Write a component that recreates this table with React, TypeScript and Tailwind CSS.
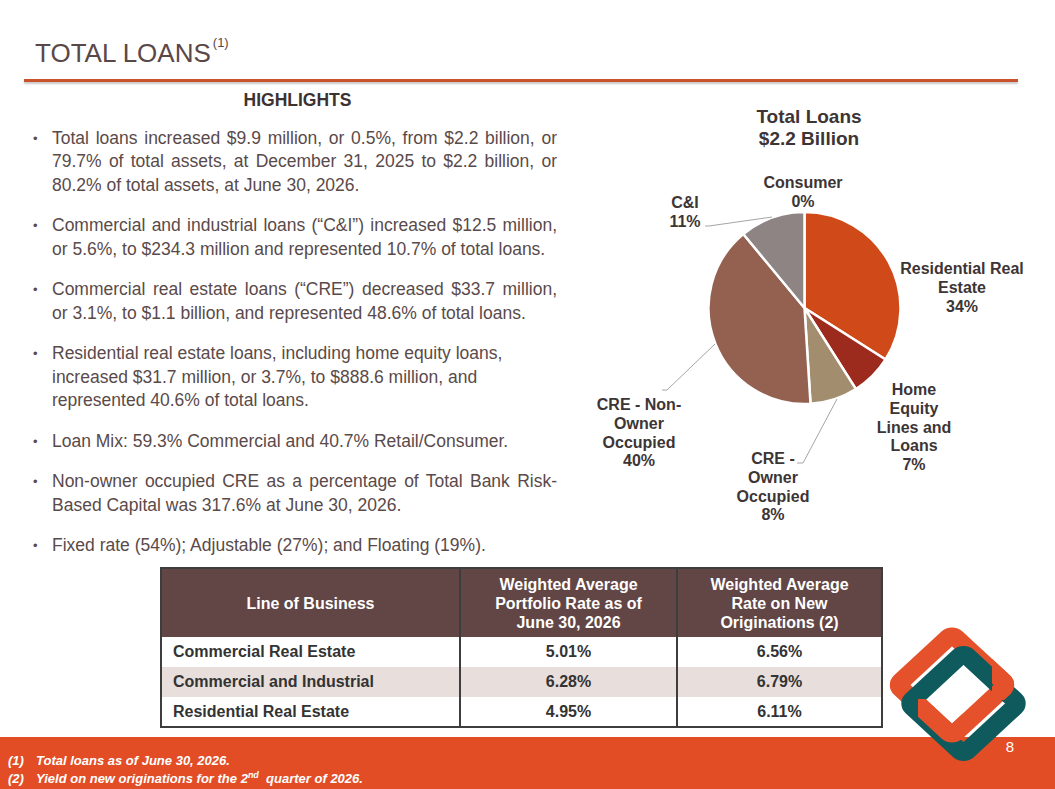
import React from 'react';

const CX = 804.5;
const CY = 308;
const R = 96;

const slices = [
  { name: 'Residential Real Estate', pct: 34, color: '#d04a19' },
  { name: 'Home Equity Lines and Loans', pct: 7, color: '#9c2b1e' },
  { name: 'CRE - Owner Occupied', pct: 8, color: '#a28e6f' },
  { name: 'CRE - Non-Owner Occupied', pct: 40, color: '#946050' },
  { name: 'C&I', pct: 11, color: '#8e8484' },
  { name: 'Consumer', pct: 0, color: '#d9d9d9' }
];

const point = (deg: number) => {
  const a = (deg * Math.PI) / 180;
  return [CX + R * Math.sin(a), CY - R * Math.cos(a)];
};

const slicePath = (start: number, end: number) => {
  const [x1, y1] = point(start);
  const [x2, y2] = point(end);
  const large = end - start > 180 ? 1 : 0;
  return `M${CX} ${CY} L${x1} ${y1} A${R} ${R} 0 ${large} 1 ${x2} ${y2} Z`;
};

// chart labels: x, first baseline, line gap, lines
const labels = [
  { x: 809, y: 123, gap: 22, size: 19, lines: ['Total Loans', '$2.2 Billion'] },
  { x: 803, y: 188, gap: 18.5, size: 16, lines: ['Consumer', '0%'] },
  { x: 685, y: 208, gap: 19, size: 16, lines: ['C&I', '11%'] },
  { x: 962, y: 274, gap: 19, size: 16, lines: ['Residential Real', 'Estate', '34%'] },
  { x: 914, y: 395, gap: 18.8, size: 16, lines: ['Home', 'Equity', 'Lines and', 'Loans', '7%'] },
  { x: 773, y: 464, gap: 18.8, size: 16, lines: ['CRE -', 'Owner', 'Occupied', '8%'] },
  { x: 639, y: 410, gap: 18.8, size: 16, lines: ['CRE - Non-', 'Owner', 'Occupied', '40%'] }
];

const bullets: { lines: string[]; justify: boolean }[] = [
  {
    lines: [
      'Total loans increased $9.9 million, or 0.5%, from $2.2 billion, or',
      '79.7% of total assets, at December 31, 2025 to $2.2 billion, or',
      '80.2% of total assets, at June 30, 2026.'
    ],
    justify: true
  },
  {
    lines: [
      'Commercial and industrial loans (\u201cC&I\u201d) increased $12.5 million,',
      'or 5.6%, to $234.3 million and represented 10.7% of total loans.'
    ],
    justify: true
  },
  {
    lines: [
      'Commercial real estate loans (\u201cCRE\u201d) decreased $33.7 million,',
      'or 3.1%, to $1.1 billion, and represented 48.6% of total loans.'
    ],
    justify: true
  },
  {
    lines: [
      'Residential real estate loans, including home equity loans,',
      'increased $31.7 million, or 3.7%, to $888.6 million, and',
      'represented 40.6% of total loans.'
    ],
    justify: false
  },
  { lines: ['Loan Mix: 59.3% Commercial and 40.7% Retail/Consumer.'], justify: false },
  {
    lines: [
      'Non-owner occupied CRE as a percentage of Total Bank Risk-',
      'Based Capital was 317.6% at June 30, 2026.'
    ],
    justify: true
  },
  { lines: ['Fixed rate (54%); Adjustable (27%); and Floating (19%).'], justify: false }
];

const rows = [
  { name: 'Commercial Real Estate', rate: '5.01%', newRate: '6.56%', shade: false },
  { name: 'Commercial and Industrial', rate: '6.28%', newRate: '6.79%', shade: true },
  { name: 'Residential Real Estate', rate: '4.95%', newRate: '6.11%', shade: false }
];

const Ring = ({ cx, cy, color }: { cx: number; cy: number; color: string }) => (
  <g transform={`translate(${cx} ${cy}) scale(1.08 1) rotate(45)`}>
    <rect x={-36} y={-36} width={72} height={72} rx={5} fill="none" stroke={color} strokeWidth={17.5} />
  </g>
);

const Logo = () => (
  <svg className="absolute left-[880px] top-[615px] w-[160px] h-[160px]" viewBox="880 615 160 160">
    <defs>
      <clipPath id="orangeOver">
        <polygon points="918,699 962,699 962,748 918,748" />
        <polygon points="992,655 1035,655 1035,700 992,700" />
      </clipPath>
    </defs>
    <Ring cx={952} cy={685} color="#e4512a" />
    <Ring cx={963.5} cy={703.5} color="#0e5a5c" />
    <g clipPath="url(#orangeOver)">
      <Ring cx={952} cy={685} color="#e4512a" />
    </g>
  </svg>
);

const PieChart = () => {
  let acc = 0;
  return (
    <svg className="w-[484px] h-[485px] shrink-0" viewBox="571 82 484 485">
      {slices.map((s) => {
        const start = acc;
        acc += s.pct * 3.6;
        if (s.pct === 0) return null;
        return (
          <path
            key={s.name}
            d={slicePath(start, acc)}
            fill={s.color}
            stroke="#ffffff"
            strokeWidth={2.5}
            strokeLinejoin="round"
          />
        );
      })}
      {/* leader lines */}
      <polyline points="705,226 709,226 772,217" fill="none" stroke="#a6a6a6" strokeWidth={1} />
      <polyline points="797,463 803,463 837,399" fill="none" stroke="#a6a6a6" strokeWidth={1} />
      <polyline points="662,390 667,390 715,344" fill="none" stroke="#a6a6a6" strokeWidth={1} />
      {labels.map((l) => (
        <text
          key={l.lines[0]}
          x={l.x}
          y={l.y}
          textAnchor="middle"
          fontFamily="'Liberation Sans', Arial, sans-serif"
          fontWeight="bold"
          fontSize={l.size}
          fill="#3d3535"
        >
          {l.lines.map((line, i) => (
            <tspan key={i} x={l.x} y={l.y + i * l.gap}>
              {line}
            </tspan>
          ))}
        </text>
      ))}
    </svg>
  );
};

export default function App() {
  return (
    <div className="w-[1055px] h-[789px] bg-white relative overflow-hidden flex flex-col font-['Liberation_Sans',Arial,sans-serif]">
      {/* Title */}
      <header className="pl-[35px] pt-[38px]">
        <h1 className="text-[26px] leading-[30px] text-[#5a4848]">
          TOTAL LOANS
          <sup className="text-[13px] ml-[2px] top-[-15px]">(1)</sup>
        </h1>
      </header>
      <div className="ml-[24px] mt-[11px] w-[994px] h-[3px] bg-[#c9512b] shadow-[0_2px_2px_rgba(0,0,0,0.22)]" />

      {/* Highlights + chart */}
      <div className="flex h-[485px]">
        <div className="ml-[24px] w-[547px] shrink-0">
          <h2 className="mt-[8px] text-center text-[17.5px] leading-[20px] font-bold text-[#3c3232]">
            HIGHLIGHTS
          </h2>
          <ul className="mt-[16.5px] pl-[9px] pr-[14px] flex flex-col gap-[17px] text-[17.5px] leading-[23.5px] text-[#5a4a4a]">
            {bullets.map((b, i) => (
              <li key={i} className="flex">
                <span className="w-[19px] shrink-0 text-[13px]">•</span>
                <div className="flex-1">
                  {b.lines.map((line, j) => (
                    <span
                      key={j}
                      className={
                        b.justify && j < b.lines.length - 1
                          ? 'block text-justify [text-align-last:justify]'
                          : 'block'
                      }
                    >
                      {line}
                    </span>
                  ))}
                </div>
              </li>
            ))}
          </ul>
        </div>
        <PieChart />
      </div>

      {/* Rates table */}
      <div className="ml-[160px]">
        <table className="w-[721px] table-fixed border-collapse border-2 border-[#3d3d3d] text-[16px] font-bold">
          <colgroup>
            <col className="w-[299px]" />
            <col className="w-[217px]" />
            <col className="w-[205px]" />
          </colgroup>
          <thead>
            <tr className="h-[69px] bg-[#624545] text-white leading-[19px]">
              <th className="font-bold">Line of Business</th>
              <th className="font-bold border-l-2 border-[#3d3d3d]">
                Weighted Average
                <br />
                Portfolio Rate as of
                <br />
                June 30, 2026
              </th>
              <th className="font-bold border-l-2 border-[#3d3d3d]">
                Weighted Average
                <br />
                Rate on New
                <br />
                Originations (2)
              </th>
            </tr>
          </thead>
          <tbody className="text-[#333333]">
            {rows.map((r) => (
              <tr key={r.name} className={r.shade ? 'h-[30px] bg-[#e8dedb]' : 'h-[30px] bg-white'}>
                <td className="pl-[11px] text-left">{r.name}</td>
                <td className="text-center border-l-2 border-[#3d3d3d]">{r.rate}</td>
                <td className="text-center border-l-2 border-[#3d3d3d]">{r.newRate}</td>
              </tr>
            ))}
          </tbody>
        </table>
      </div>

      {/* Footer */}
      <footer className="mt-auto h-[52px] bg-[#e24d26] flex justify-between items-start text-white">
        <div className="pl-[8px] pt-[15px] text-[13px] leading-[18px] font-bold italic">
          <div className="flex">
            <span className="w-[28px]">(1)</span>
            <span>Total loans as of June 30, 2026.</span>
          </div>
          <div className="flex">
            <span className="w-[28px]">(2)</span>
            <span>
              Yield on new originations for the 2<sup className="text-[9px] top-[-5px]">nd</sup>&nbsp; quarter of 2026.
            </span>
          </div>
        </div>
        <div className="pt-[1px] pr-[41px] text-[15px] leading-[18px]">8</div>
      </footer>

      <Logo />
    </div>
  );
}
